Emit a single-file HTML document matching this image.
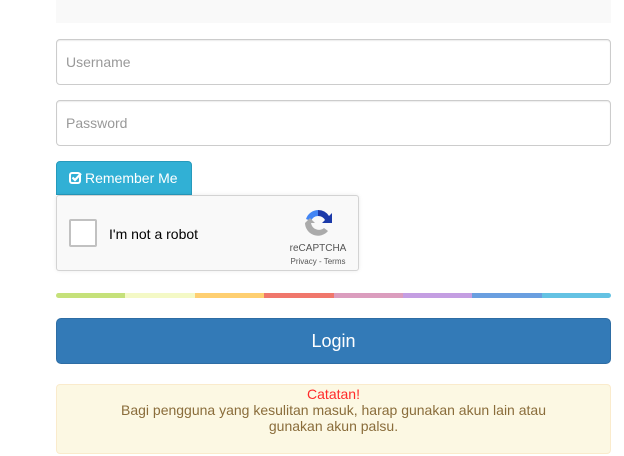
<!DOCTYPE html>
<html><head><meta charset="utf-8"><style>
body{margin:0;width:624px;height:456px;background:#fff;font-family:"Liberation Sans",Arial,sans-serif;position:relative;overflow:hidden}
.a{position:absolute;box-sizing:border-box}
.inp{left:56px;width:555px;height:46px;border:1px solid #ccc;border-radius:4px;box-shadow:inset 0 1px 1px rgba(0,0,0,.075);color:#999;font-size:14px;padding:0 0 0 9px;line-height:44px}
</style></head><body>
<div class="a" style="left:56px;top:0;width:555px;height:23px;background:#f9f9f9"></div>
<div class="a inp" style="top:39px">Username</div>
<div class="a inp" style="top:100px">Password</div>
<div class="a" style="left:56px;top:161px;width:136px;height:34px;background:#31b0d5;border:1px solid #269abc;border-radius:4px 4px 0 0;color:#fff;font-size:14px;line-height:32px;padding-left:12px">
<svg width="14" height="14" viewBox="0 0 14 14" style="vertical-align:-2px;margin-right:2px"><rect x="1" y="2" width="10" height="10" rx="2" fill="none" stroke="#fff" stroke-width="2"/><path d="M3.5 6.5l2.5 2.5 6-6.5" fill="none" stroke="#fff" stroke-width="2.2"/></svg>Remember Me</div>
<div class="a" style="left:56px;top:195px;width:303px;height:76px;background:#f9f9f9;border:1px solid #d3d3d3;border-radius:3px;box-shadow:0 0 4px rgba(0,0,0,.08)">
<div class="a" style="left:12px;top:23px;width:28px;height:28px;background:#fff;border:2px solid #c1c1c1;border-radius:2px"></div>
<div class="a" style="left:52px;top:30px;font-size:14px;color:#000">I'm not a robot</div>
<svg class="a" style="left:245px;top:11px" width="32" height="32" viewBox="0 0 32 32"><path d="M16 3a13 13 0 0 1 11 6l3-3v10H20l3-3a8 8 0 0 0-7-4z" fill="#1c3aa9"/><path d="M16 3A13 13 0 0 0 4 12l5 2a8 8 0 0 1 7-5z" fill="#4285f4"/><path d="M3 16a13 13 0 0 0 23 8l-4-3a8 8 0 0 1-13-5H13L8 11 3 16z" fill="#ababab"/></svg>
<div class="a" style="left:218px;top:47px;width:86px;text-align:center;font-size:10px;color:#555">reCAPTCHA</div>
<div class="a" style="left:218px;top:61px;width:86px;text-align:center;font-size:8px;color:#555">Privacy - Terms</div>
</div>
<div class="a" style="left:56px;top:293px;width:555px;height:5px;border-radius:3px;overflow:hidden;display:flex">
<div style="flex:1;background:#c5e17a"></div><div style="flex:1;background:#f4f9c6"></div><div style="flex:1;background:#fecf71"></div><div style="flex:1;background:#f0776c"></div><div style="flex:1;background:#db9dbe"></div><div style="flex:1;background:#c49ee2"></div><div style="flex:1;background:#6a9fe0"></div><div style="flex:1;background:#64c2e3"></div></div>
<div class="a" style="left:56px;top:318px;width:555px;height:46px;background:#337ab7;border:1px solid #2e6da4;border-radius:5px;color:#fff;font-size:18px;text-align:center;line-height:44px">Login</div>
<div class="a" style="left:56px;top:384px;width:555px;height:70px;background:#fcf8e3;border:1px solid #faebcc;border-radius:4px;text-align:center;font-size:14px;line-height:16px;color:#8a6d3b;padding-top:1px">
<div style="color:#ff2a2a">Catatan!</div>
Bagi pengguna yang kesulitan masuk, harap gunakan akun lain atau<br>gunakan akun palsu.</div>
</body></html>
